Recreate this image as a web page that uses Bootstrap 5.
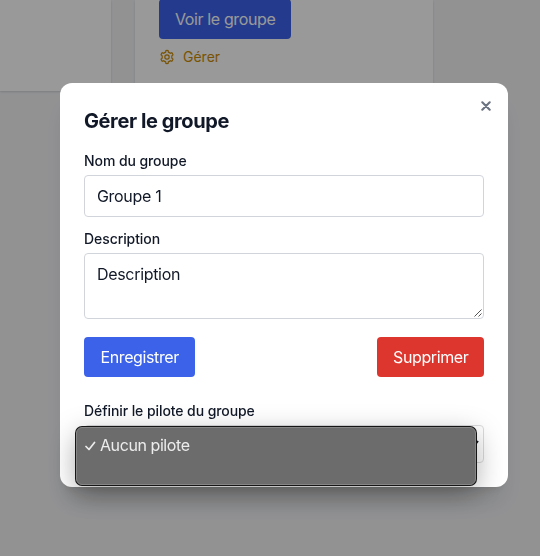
<!DOCTYPE html>
<html lang="fr">
<head>
<meta charset="utf-8">
<meta name="viewport" content="width=device-width, initial-scale=1">
<title>Gérer le groupe</title>
<link href="https://cdn.jsdelivr.net/npm/bootstrap@5.3.0/dist/css/bootstrap.min.css" rel="stylesheet">
<style>
body{font-family:Inter,"Liberation Sans",sans-serif;font-size:16px;line-height:24px;color:#111827;background:#f3f4f6;height:556px;overflow:hidden}
.groups{gap:24px;height:91px}
.group-card{background:#fff;border-radius:0 0 4px 4px;box-shadow:0 1px 3px rgba(0,0,0,.1),0 1px 2px rgba(0,0,0,.06)}
.group-card.first{width:111px;flex:none;border-bottom-left-radius:0}
.group-card.second{width:298px;flex:none;padding:0 24px}
.app-btn{--bs-btn-color:#fff;--bs-btn-border-width:0;--bs-btn-padding-x:16px;--bs-btn-padding-y:8px;--bs-btn-border-radius:4px;--bs-btn-line-height:24px;--bs-btn-font-weight:400;height:40px;padding-right:15.6px;white-space:nowrap;letter-spacing:-.38px}
.app-blue{--bs-btn-bg:#3b62e8;width:111px}
.app-red{--bs-btn-bg:#dc362e;width:107px}
.app-btn.up{margin-top:-1px;--bs-btn-bg:#3b62eb;width:132px}
.manage{color:#ca8a04;font-size:14px;font-weight:400;line-height:20px;gap:8px;margin-top:8px;letter-spacing:0}
.backdrop-layer{background:rgba(0,0,0,.4);z-index:5;padding-top:83px;padding-left:60px}
.dialog-panel{width:448px;height:404px;border-radius:12px;padding:24px;background:#fff;box-shadow:0 20px 25px -5px rgba(0,0,0,.1),0 8px 10px -6px rgba(0,0,0,.1)}
.dialog-title{font-size:20px;line-height:28px;font-weight:700;letter-spacing:-.4px;margin-bottom:16px}
.close-x{top:18px;right:17px;width:10px;height:10px;line-height:0}
.field-label{font-size:14px;line-height:20px;font-weight:500;letter-spacing:-.08px;margin-bottom:4px;display:block}
.field{border:1px solid #d1d5db;border-radius:4px;padding:8px 12px;font-size:16px;line-height:24px;letter-spacing:-.32px;color:#111827;display:block}
.field.one{height:42px;margin-bottom:12px}
.field.area{height:66px;margin-bottom:18px;resize:none}
.grip{right:1px;bottom:1px;line-height:0}
.picker{height:38px;background:#fff;margin-top:1px;border-color:#dcdcde}
.options-menu{left:16px;top:344px;width:400px;height:58px;border-radius:6px;background:#6c6c6c;border:1px solid #868686;box-shadow:0 0 0 1px #161616,0 8px 28px rgba(0,0,0,.34);color:#ececec;padding:5px 8px;gap:3px;letter-spacing:-.42px}
</style>
</head>
<body>
<main class="groups d-flex">
  <section class="group-card first"></section>
  <section class="group-card second">
    <button class="btn app-btn up d-block">Voir le groupe</button>
    <div class="manage d-flex align-items-center">
      <svg width="16" height="16" viewBox="0 0 1024 1024" fill="none" stroke="currentColor" stroke-width="76"><path d="M895 650l-78-66q12-72 0-144l78-66q-25-77-77-137l-96 34q-57-48-125-72l-17-100q-68-14-136 0l-17 100q-68 24-125 72l-96-34q-52 60-77 137l78 66q-12 72 0 144l-78 66q25 77 77 137l96-34q57 48 125 72l17 100q68 14 136 0l17-100q68-24 125-72l96 34q52-60 77-137z"/><circle cx="512" cy="512" r="140"/></svg>
      <span>Gérer</span>
    </div>
  </section>
</main>
<div class="backdrop-layer position-fixed top-0 start-0 w-100 h-100">
  <div class="dialog-panel position-relative" role="dialog">
    <span class="close-x position-absolute"><svg width="10" height="10" viewBox="0 0 10 10" stroke="#6b7280" stroke-width="2.1" stroke-linecap="round"><path d="M1.3 1.3l7.4 7.4M8.7 1.3L1.3 8.7"/></svg></span>
    <h2 class="dialog-title">Gérer le groupe</h2>
    <label class="field-label" for="nom">Nom du groupe</label>
    <input id="nom" class="field one w-100" value="Groupe 1">
    <label class="field-label" for="desc">Description</label>
    <div class="position-relative">
      <textarea id="desc" class="field area w-100">Description</textarea>
      <span class="grip position-absolute"><svg width="10" height="10" viewBox="0 0 10 10" stroke="#555" stroke-width="1"><path d="M1.5 8.5l7-7M5.5 8.5l3-3"/></svg></span>
    </div>
    <div class="d-flex justify-content-between mb-4">
      <button class="btn app-btn app-blue">Enregistrer</button>
      <button class="btn app-btn app-red">Supprimer</button>
    </div>
    <span class="field-label">Définir le pilote du groupe</span>
    <div class="field picker d-flex justify-content-end align-items-center pe-0"><svg width="12" height="8" viewBox="0 0 12 8" fill="none" stroke="#111827" stroke-width="2"><path d="M-1 1l4 5 4-5"/></svg></div>
    <div class="options-menu position-absolute d-flex align-items-start">
      <svg class="mt-2" width="12" height="10" viewBox="0 0 12 10" fill="none" stroke="#ececec" stroke-width="1.7" stroke-linecap="round" stroke-linejoin="round"><path d="M1 5.5l3 3 5.5-7"/></svg>
      <span>Aucun pilote</span>
    </div>
  </div>
</div>
<script src="https://cdn.jsdelivr.net/npm/bootstrap@5.3.0/dist/js/bootstrap.bundle.min.js"></script>
</body>
</html>
